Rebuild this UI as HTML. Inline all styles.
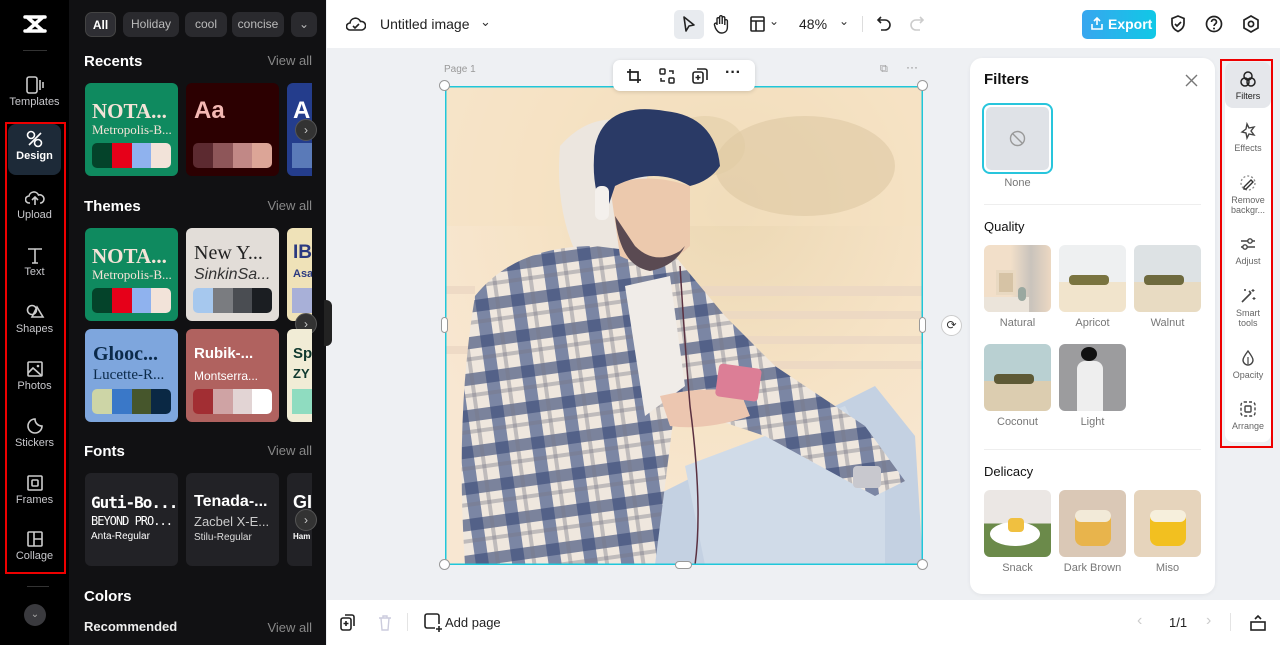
<!DOCTYPE html>
<html><head><meta charset="utf-8"><style>
*{box-sizing:border-box;margin:0;padding:0}
body{width:1280px;height:645px;overflow:hidden;font-family:"Liberation Sans",sans-serif;background:#eef0f3;position:relative}
.abs{position:absolute}
#rail{left:0;top:0;width:69px;height:645px;background:#000}
.ri{position:absolute;left:8px;width:53px;height:50px;color:#c8c8cc;font-size:11px;text-align:center}
.ri svg{display:block;margin:6px auto 2px}
#panel{left:69px;top:0;width:257px;height:645px;background:#111113;color:#fff}
.chip{position:absolute;top:12px;height:25px;border-radius:7px;background:#2a2a2e;color:#bbb;font-size:12px;line-height:25px;text-align:center}
.h{position:absolute;left:15px;font-size:15px;font-weight:bold;color:#fff}
.va{position:absolute;right:14px;font-size:13px;color:#888}
.card{position:absolute;width:93px;height:93px;border-radius:6px;overflow:hidden}
.sw{position:absolute;left:7px;bottom:8px;width:79px;height:25px;border-radius:5px;overflow:hidden;display:flex}
.sw i{flex:1}
.arr{position:absolute;width:22px;height:22px;border-radius:50%;background:#333;border:1px solid #555;color:#ccc;font-size:12px;line-height:20px;text-align:center}
#top{left:327px;top:0;width:953px;height:48px;background:#fff}
#bot{left:327px;top:600px;width:953px;height:45px;background:#fff}
#fp{left:970px;top:58px;width:245px;height:536px;background:#fff;border-radius:12px;box-shadow:0 1px 4px rgba(0,0,0,.06)}
.th{position:absolute;width:67px;height:67px;border-radius:6px;overflow:hidden}
.tl{position:absolute;width:67px;text-align:center;font-size:11px;color:#777}
#rr{left:1225px;top:62px;width:46px;height:380px;background:#fff;border-radius:8px}
.rt{position:absolute;left:0;width:46px;text-align:center;font-size:9px;color:#666;line-height:10px}
.rt svg{display:block;margin:0 auto 3px}
.hd{position:absolute;width:11px;height:11px;border-radius:50%;background:#fff;border:1px solid #999}
</style></head><body>

<div id="rail" class="abs">
  <svg class="abs" style="left:22px;top:14px" width="26" height="20" viewBox="0 0 26 20"><path d="M3 3h20M3 17h20M5 3l16 14M21 3L5 17" stroke="#fff" stroke-width="3.5" fill="none" stroke-linecap="round"/></svg>
  <div class="abs" style="left:23px;top:50px;width:24px;height:1px;background:#333"></div>
  <div class="ri" style="top:70px"><svg width="20" height="18" viewBox="0 0 20 18"><rect x="2" y="1" width="10" height="16" rx="2" stroke="#ccc" stroke-width="1.6" fill="none"/><path d="M15 4v10M18 6v6" stroke="#ccc" stroke-width="1.6"/></svg>Templates</div>
  <div class="ri" style="top:124px;background:#1d2a38;border-radius:8px;height:51px;color:#fff;font-weight:bold"><svg width="20" height="18" viewBox="0 0 20 18"><circle cx="6" cy="5" r="3.5" stroke="#fff" stroke-width="1.6" fill="none"/><circle cx="13" cy="13" r="3.5" stroke="#fff" stroke-width="1.6" fill="none"/><path d="M4 15L16 3" stroke="#fff" stroke-width="1.6"/></svg>Design</div>
  <div class="ri" style="top:183px"><svg width="20" height="18" viewBox="0 0 20 18"><path d="M5 14H4a3.5 3.5 0 010-7 5 5 0 019.5-1A4 4 0 0116 14h-1M10 8v8M7 11l3-3 3 3" stroke="#ccc" stroke-width="1.6" fill="none"/></svg>Upload</div>
  <div class="ri" style="top:240px"><svg width="20" height="18" viewBox="0 0 20 18"><path d="M3 3h14M10 3v14M7 17h6" stroke="#ccc" stroke-width="1.6" fill="none"/></svg>Text</div>
  <div class="ri" style="top:297px"><svg width="20" height="18" viewBox="0 0 20 18"><circle cx="7" cy="7" r="4.5" stroke="#ccc" stroke-width="1.6" fill="none"/><path d="M12 4l6 10H7z" stroke="#ccc" stroke-width="1.6" fill="none"/></svg>Shapes</div>
  <div class="ri" style="top:354px"><svg width="20" height="18" viewBox="0 0 20 18"><rect x="3" y="2" width="14" height="14" rx="1" stroke="#ccc" stroke-width="1.6" fill="none"/><path d="M3 13l5-5 9 8" stroke="#ccc" stroke-width="1.6" fill="none"/><circle cx="13" cy="6" r="1.3" fill="#ccc"/></svg>Photos</div>
  <div class="ri" style="top:411px"><svg width="20" height="18" viewBox="0 0 20 18"><path d="M17 9a7 7 0 11-7-7c0 4 3 7 7 7z" stroke="#ccc" stroke-width="1.6" fill="none"/></svg>Stickers</div>
  <div class="ri" style="top:468px"><svg width="20" height="18" viewBox="0 0 20 18"><rect x="3" y="2" width="14" height="14" rx="1" stroke="#ccc" stroke-width="1.6" fill="none"/><rect x="7" y="6" width="6" height="6" rx="1" stroke="#ccc" stroke-width="1.6" fill="none"/></svg>Frames</div>
  <div class="ri" style="top:524px"><svg width="20" height="18" viewBox="0 0 20 18"><rect x="3" y="2" width="14" height="14" rx="1" stroke="#ccc" stroke-width="1.6" fill="none"/><path d="M9 2v14M9 9h8" stroke="#ccc" stroke-width="1.6"/></svg>Collage</div>
  <div class="abs" style="left:5px;top:122px;width:61px;height:452px;border:2px solid #e00"></div>
  <div class="abs" style="left:27px;top:586px;width:22px;height:1px;background:#333"></div>
  <div class="abs" style="left:24px;top:604px;width:22px;height:22px;border-radius:50%;background:#3a3a3e;color:#aaa;font-size:10px;text-align:center;line-height:22px">⌄</div>
</div>

<div id="panel" class="abs">
  <div class="chip" style="left:16px;width:31px;background:#2e2e33;border:1px solid #444;color:#fff;font-weight:bold">All</div>
  <div class="chip" style="left:54px;width:56px">Holiday</div>
  <div class="chip" style="left:116px;width:42px">cool</div>
  <div class="chip" style="left:163px;width:52px;overflow:hidden">concise</div>
  <div class="chip" style="left:222px;width:26px">⌄</div>

  <div class="h" style="top:53px">Recents</div><div class="va" style="top:53px">View all</div>
  <div class="card" style="left:16px;top:83px;background:#0f8a5f"><div class="abs" style="left:7px;top:16px;font:bold 21px 'Liberation Serif',serif;color:#f4e3d7">NOTA...</div><div class="abs" style="left:7px;top:39px;font:13px 'Liberation Serif',serif;color:#f4e3d7">Metropolis-B...</div><div class="sw"><i style="background:#04432a"></i><i style="background:#e60019"></i><i style="background:#8fb2ee"></i><i style="background:#f2e3d9"></i></div></div>
  <div class="card" style="left:117px;top:83px;background:#2c0001"><div class="abs" style="left:8px;top:14px;font:bold 24px 'Liberation Sans',sans-serif;color:#f4b8b3">Aa</div><div class="sw"><i style="background:#5c2a30"></i><i style="background:#8e5659"></i><i style="background:#c18886"></i><i style="background:#dca597"></i></div></div>
  <div class="card" style="left:218px;top:83px;width:25px;background:#243d8c;border-radius:6px 0 0 6px"><div class="abs" style="left:6px;top:14px;font:bold 24px sans-serif;color:#fff">A</div><div class="abs" style="left:5px;bottom:8px;width:20px;height:25px;background:#5a7ab8"></div></div>
  <div class="arr" style="left:226px;top:119px">›</div>

  <div class="h" style="top:198px">Themes</div><div class="va" style="top:198px">View all</div>
  <div class="card" style="left:16px;top:228px;background:#0f8a5f"><div class="abs" style="left:7px;top:16px;font:bold 21px 'Liberation Serif',serif;color:#f4e3d7">NOTA...</div><div class="abs" style="left:7px;top:39px;font:13px 'Liberation Serif',serif;color:#f4e3d7">Metropolis-B...</div><div class="sw"><i style="background:#04432a"></i><i style="background:#e60019"></i><i style="background:#8fb2ee"></i><i style="background:#f2e3d9"></i></div></div>
  <div class="card" style="left:117px;top:228px;background:#e2ddd8"><div class="abs" style="left:8px;top:14px;font:20px 'Liberation Serif',serif;color:#222">New Y...</div><div class="abs" style="left:8px;top:38px;font:italic 16px 'Liberation Sans',sans-serif;color:#333">SinkinSa...</div><div class="sw"><i style="background:#a6c8ee"></i><i style="background:#7a7c80"></i><i style="background:#4a4d52"></i><i style="background:#1b1e22"></i></div></div>
  <div class="card" style="left:218px;top:228px;width:25px;background:#efe2b8;border-radius:6px 0 0 6px"><div class="abs" style="left:6px;top:14px;font:bold 19px sans-serif;color:#2b3a80">IB</div><div class="abs" style="left:6px;top:40px;font:bold 11px sans-serif;color:#2b3a80">Asa</div><div class="abs" style="left:5px;bottom:8px;width:20px;height:25px;background:#a8b0d8"></div></div>
  <div class="arr" style="left:226px;top:313px">›</div>

  <div class="card" style="left:16px;top:329px;background:#7ea6dd"><div class="abs" style="left:8px;top:14px;font:bold 20px 'Liberation Serif',serif;color:#0b2a4a">Glooc...</div><div class="abs" style="left:8px;top:38px;font:15px 'Liberation Serif',serif;color:#0b2a4a">Lucette-R...</div><div class="sw"><i style="background:#cdd5a6"></i><i style="background:#3a78c8"></i><i style="background:#46562c"></i><i style="background:#0a2844"></i></div></div>
  <div class="card" style="left:117px;top:329px;background:#b0625f"><div class="abs" style="left:8px;top:16px;font:bold 15px sans-serif;color:#fff">Rubik-...</div><div class="abs" style="left:8px;top:40px;font:12px sans-serif;color:#fff">Montserra...</div><div class="sw"><i style="background:#a22e33"></i><i style="background:#cfa3a4"></i><i style="background:#e2d4d4"></i><i style="background:#fff"></i></div></div>
  <div class="card" style="left:218px;top:329px;width:25px;background:#f1ecd6;border-radius:6px 0 0 6px"><div class="abs" style="left:6px;top:16px;font:bold 15px sans-serif;color:#10382e">Sp</div><div class="abs" style="left:6px;top:37px;font:bold 13px sans-serif;color:#10382e">ZY</div><div class="abs" style="left:5px;bottom:8px;width:20px;height:25px;background:#8fdcc0"></div></div>

  <div class="h" style="top:443px">Fonts</div><div class="va" style="top:443px">View all</div>
  <div class="card" style="left:16px;top:473px;background:#222226"><div class="abs" style="left:6px;top:20px;font:bold 16px 'DejaVu Sans Mono',monospace;color:#fff;letter-spacing:-1px">Guti-Bo...</div><div class="abs" style="left:6px;top:41px;font:12px 'DejaVu Sans Mono',monospace;color:#fff;letter-spacing:-1px">BEYOND PRO...</div><div class="abs" style="left:6px;top:58px;font:10px sans-serif;color:#fff">Anta-Regular</div></div>
  <div class="card" style="left:117px;top:473px;background:#222226"><div class="abs" style="left:8px;top:20px;font:bold 16px sans-serif;color:#fff">Tenada-...</div><div class="abs" style="left:8px;top:41px;font:13px sans-serif;color:#ccc">Zacbel X-E...</div><div class="abs" style="left:8px;top:59px;font:10px sans-serif;color:#ddd">Stilu-Regular</div></div>
  <div class="card" style="left:218px;top:473px;width:25px;background:#222226;border-radius:6px 0 0 6px"><div class="abs" style="left:6px;top:19px;font:bold 18px sans-serif;color:#fff">GI</div><div class="abs" style="left:6px;top:59px;font:bold 8px sans-serif;color:#fff">Ham</div></div>
  <div class="arr" style="left:226px;top:509px">›</div>

  <div class="h" style="top:588px">Colors</div>
  <div class="abs" style="left:15px;top:619px;font-size:13px;font-weight:bold;color:#eee">Recommended</div><div class="va" style="top:620px">View all</div>
</div>
<div class="abs" style="left:324px;top:300px;width:8px;height:46px;background:#222;border-radius:0 6px 6px 0"></div>

<div id="top" class="abs">
  <svg class="abs" style="left:19px;top:15px" width="20" height="18" viewBox="0 0 20 18"><path d="M5 15H4a3.5 3.5 0 010-7 5.5 5.5 0 0110.5-1.5A4.3 4.3 0 0116 15z" stroke="#222" stroke-width="1.6" fill="none"/><path d="M7 11l2 2 4-4" stroke="#222" stroke-width="1.6" fill="none"/></svg>
  <div class="abs" style="left:53px;top:16px;font-size:14px;color:#222">Untitled image</div>
  <div class="abs" style="left:153px;top:14px;font-size:13px;color:#333">⌄</div>
  <div class="abs" style="left:347px;top:10px;width:30px;height:29px;background:#e8ebef;border-radius:5px"></div>
  <svg class="abs" style="left:354px;top:15px" width="16" height="19" viewBox="0 0 16 19"><path d="M3 2l10 8-5 1-3 5z" stroke="#222" stroke-width="1.6" fill="none" stroke-linejoin="round"/></svg>
  <svg class="abs" style="left:385px;top:14px" width="18" height="20" viewBox="0 0 18 20"><path d="M5 11V5a1.3 1.3 0 012.6 0v5V3a1.3 1.3 0 012.6 0v7V4a1.3 1.3 0 012.6 0v7V7a1.3 1.3 0 012.6 0v6c0 4-2.5 6-6 6-3 0-4.5-2-6-5L2.5 11a1.3 1.3 0 012.5-1z" stroke="#222" stroke-width="1.4" fill="none"/></svg>
  <svg class="abs" style="left:422px;top:15px" width="17" height="18" viewBox="0 0 17 18"><rect x="2" y="2" width="13" height="14" rx="1" stroke="#222" stroke-width="1.6" fill="none"/><path d="M2 6h13M7 6v10" stroke="#222" stroke-width="1.6"/></svg>
  <div class="abs" style="left:442px;top:14px;font-size:12px;color:#333">⌄</div>
  <div class="abs" style="left:472px;top:16px;font-size:14px;color:#222">48%</div>
  <div class="abs" style="left:512px;top:14px;font-size:12px;color:#333">⌄</div>
  <div class="abs" style="left:535px;top:16px;width:1px;height:16px;background:#ddd"></div>
  <svg class="abs" style="left:549px;top:15px" width="16" height="18" viewBox="0 0 16 18"><path d="M5 2L2 5l3 3M2 5h7a5 5 0 010 10H5" stroke="#222" stroke-width="1.6" fill="none"/></svg>
  <svg class="abs" style="left:582px;top:15px" width="16" height="18" viewBox="0 0 16 18"><path d="M11 2l3 3-3 3M14 5H7a5 5 0 000 10h4" stroke="#ccc" stroke-width="1.6" fill="none"/></svg>
  <div class="abs" style="left:755px;top:10px;width:74px;height:29px;border-radius:5px;background:linear-gradient(90deg,#38a6ef,#10c8e6);color:#fff;font-size:14px;font-weight:bold;line-height:29px;padding-left:26px">Export</div>
  <svg class="abs" style="left:763px;top:16px" width="14" height="15" viewBox="0 0 14 15"><path d="M7 9V2M4 5l3-3 3 3M2 8v5h10V8" stroke="#fff" stroke-width="1.6" fill="none"/></svg>
  <svg class="abs" style="left:842px;top:14px" width="18" height="20" viewBox="0 0 18 20"><path d="M9 2l6 2.5v5c0 4-3 6.5-6 8-3-1.5-6-4-6-8v-5z" stroke="#222" stroke-width="1.7" fill="none"/><path d="M6 10l2 2 4-4" stroke="#222" stroke-width="1.7" fill="none"/></svg>
  <svg class="abs" style="left:877px;top:14px" width="20" height="20" viewBox="0 0 20 20"><circle cx="10" cy="10" r="7.5" stroke="#222" stroke-width="1.7" fill="none"/><path d="M7.5 8a2.5 2.5 0 015 0c0 2-2.5 2-2.5 4" stroke="#222" stroke-width="1.7" fill="none"/><circle cx="10" cy="14.5" r="1" fill="#222"/></svg>
  <svg class="abs" style="left:914px;top:14px" width="20" height="20" viewBox="0 0 20 20"><path d="M10 2l7 4v8l-7 4-7-4V6z" stroke="#222" stroke-width="1.7" fill="none"/><circle cx="10" cy="10" r="2.6" stroke="#222" stroke-width="1.7" fill="none"/></svg>
</div>

<!-- canvas -->
<div class="abs" style="left:444px;top:64px;font-size:10px;color:#999">Page 1</div>
<div class="abs" style="left:880px;top:63px;font-size:11px;color:#999">⧉</div>
<div class="abs" style="left:906px;top:60px;font-size:12px;color:#888">···</div>

<svg class="abs" style="left:445px;top:86px" width="478" height="479" viewBox="0 0 478 479">
  <defs>
    <pattern id="pl" width="36" height="36" patternUnits="userSpaceOnUse" patternTransform="rotate(-8)">
      <rect width="36" height="36" fill="#efe7de"/>
      <rect x="0" y="0" width="13" height="36" fill="#4a5d8c" opacity=".7"/>
      <rect x="0" y="0" width="36" height="12" fill="#3e4d7a" opacity=".65"/>
      <rect x="20" y="0" width="4" height="36" fill="#778" opacity=".4"/>
      <rect x="0" y="20" width="36" height="4" fill="#778" opacity=".4"/>
    </pattern>
    <radialGradient id="bg" cx=".6" cy=".25" r=".7"><stop offset="0" stop-color="#ecd8b4"/><stop offset=".6" stop-color="#f6e3c6"/><stop offset="1" stop-color="#f8e7d2"/></radialGradient>
  </defs>
  <rect width="478" height="479" fill="url(#bg)"/>
  <rect x="0" y="0" width="478" height="140" fill="#f6e2c1" opacity=".5"/>
  <ellipse cx="360" cy="80" rx="90" ry="50" fill="#d9c49e" opacity=".5"/>
  <ellipse cx="260" cy="60" rx="40" ry="30" fill="#e0cba4" opacity=".5"/>
  <g fill="#ecd8c4" opacity=".8"><rect x="230" y="200" width="248" height="10"/><rect x="230" y="225" width="248" height="8"/><rect x="230" y="250" width="248" height="8"/><rect x="230" y="275" width="248" height="8"/><rect x="0" y="200" width="30" height="8"/><rect x="0" y="260" width="30" height="8"/></g>
  <path d="M190 420 L430 300 L470 350 L478 479 L200 479 Z" fill="#c4d1e2"/>
  <path d="M240 380 L400 320 L440 400 L440 479 L260 479Z" fill="#d0dbe8"/>
  <path d="M115 60 Q150 20 200 40 L205 170 L130 165 Q110 120 115 60Z" fill="#ece6df"/>
  <path d="M30 210 Q70 160 150 160 L230 170 L280 230 L330 280 L420 340 L460 395 L430 410 L320 350 L230 320 L210 479 L20 479 Q10 330 30 210Z" fill="url(#pl)"/>
  <path d="M180 200 L225 190 L240 300 L200 330Z" fill="#f0ece8"/>
  <path d="M165 100 Q200 85 245 100 L245 160 Q215 190 175 170 Z" fill="#ecc9ad"/>
  <path d="M170 130 Q175 180 205 185 Q230 180 240 160 L235 165 Q210 180 190 160Z" fill="#5a4a52"/>
  <path d="M150 60 Q160 15 220 25 Q270 30 275 80 Q265 95 245 100 Q210 80 170 100 L160 130 Q145 100 150 60Z" fill="#2a3a66"/>
  <rect x="150" y="100" width="14" height="34" rx="6" fill="#f4f0ec"/>
  <path d="M215 310 Q255 300 295 305 L305 330 Q260 345 225 340Z" fill="#ecc6b0"/>
  <rect x="272" y="280" width="43" height="33" rx="4" fill="#dc7e96" transform="rotate(8 293 296)"/>
  <rect x="408" y="380" width="28" height="22" rx="4" fill="#c8c8ce"/>
  <path d="M235 180 Q240 260 245 320 Q258 420 250 479" stroke="#5a3040" stroke-width="1.5" fill="none"/>
  <rect x="0.75" y="0.75" width="476.5" height="477.5" fill="none" stroke="#1fc7da" stroke-width="1.5"/>
</svg>
<div class="hd" style="left:439px;top:80px"></div><div class="hd" style="left:917px;top:80px"></div>
<div class="hd" style="left:439px;top:559px"></div><div class="hd" style="left:917px;top:559px"></div>
<div class="abs" style="left:441px;top:317px;width:7px;height:16px;border-radius:4px;background:#fff;border:1px solid #999"></div>
<div class="abs" style="left:919px;top:317px;width:7px;height:16px;border-radius:4px;background:#fff;border:1px solid #999"></div>
<div class="abs" style="left:675px;top:561px;width:17px;height:8px;border-radius:4px;background:#fff;border:1px solid #999"></div>
<div class="abs" style="left:941px;top:315px;width:21px;height:21px;border-radius:50%;background:#fff;border:1px solid #ccc;font-size:12px;line-height:19px;text-align:center;color:#333">⟳</div>

<div class="abs" style="left:613px;top:60px;width:142px;height:31px;background:#fff;border-radius:7px;box-shadow:0 1px 4px rgba(0,0,0,.15)"></div>
<svg class="abs" style="left:626px;top:68px" width="16" height="16" viewBox="0 0 16 16"><path d="M4 1v11h11M1 4h11v11" stroke="#222" stroke-width="1.7" fill="none"/></svg>
<svg class="abs" style="left:659px;top:68px" width="16" height="16" viewBox="0 0 16 16"><rect x="1" y="1" width="5" height="5" rx="1" stroke="#222" stroke-width="1.5" fill="none"/><rect x="10" y="10" width="5" height="5" rx="1" stroke="#222" stroke-width="1.5" fill="none"/><path d="M10 3h4v3M6 13H2v-3" stroke="#222" stroke-width="1.5" fill="none"/></svg>
<svg class="abs" style="left:692px;top:68px" width="16" height="16" viewBox="0 0 16 16"><rect x="1" y="4" width="10" height="11" rx="2" stroke="#222" stroke-width="1.6" fill="none"/><path d="M5 1h8a2 2 0 012 2v9M6 7v5M3.5 9.5h5" stroke="#222" stroke-width="1.6" fill="none"/></svg>
<div class="abs" style="left:725px;top:64px;font-size:16px;font-weight:bold;color:#222">···</div>

<!-- filters panel -->
<div id="fp" class="abs">
  <div class="abs" style="left:14px;top:13px;font-size:15px;font-weight:bold;color:#111">Filters</div>
  <svg class="abs" style="left:215px;top:16px" width="13" height="13" viewBox="0 0 13 13"><path d="M1 1l11 11M12 1L1 12" stroke="#777" stroke-width="1.4"/></svg>
  <div class="abs" style="left:12px;top:45px;width:71px;height:71px;border:2px solid #28c5dc;border-radius:8px;padding:2px"><div style="width:100%;height:100%;background:#dfe2e7;border-radius:5px"></div></div>
  <svg class="abs" style="left:39px;top:72px" width="17" height="17" viewBox="0 0 17 17"><circle cx="8.5" cy="8.5" r="7" stroke="#999" stroke-width="1.4" fill="none"/><path d="M3.5 3.5l10 10" stroke="#999" stroke-width="1.4"/></svg>
  <div class="tl" style="left:14px;top:119px">None</div>
  <div class="abs" style="left:14px;top:146px;width:217px;height:1px;background:#eee"></div>
  <div class="abs" style="left:14px;top:161px;font-size:13px;color:#111">Quality</div>
  <div class="th" style="left:14px;top:187px;background:linear-gradient(90deg,#f2dfc9 40%,#c9c3bc 70%,#ecd8c2)"><div class="abs" style="left:12px;top:25px;width:20px;height:25px;background:#d6c3a5;border:3px solid #e9d9c2"></div><div class="abs" style="left:0;top:52px;width:45px;height:15px;background:#ebe4da"></div><div class="abs" style="left:34px;top:42px;width:8px;height:14px;border-radius:4px;background:#9aa8a0"></div></div>
  <div class="th" style="left:89px;top:187px;background:linear-gradient(#eef0f1 55%,#f1e4cc 55%)"><div class="abs" style="left:10px;top:30px;width:40px;height:10px;background:#7a7440;border-radius:4px"></div></div>
  <div class="th" style="left:164px;top:187px;background:linear-gradient(#dde2e4 55%,#e8dbc2 55%)"><div class="abs" style="left:10px;top:30px;width:40px;height:10px;background:#6e6a3e;border-radius:4px"></div></div>
  <div class="tl" style="left:14px;top:259px">Natural</div><div class="tl" style="left:89px;top:259px">Apricot</div><div class="tl" style="left:164px;top:259px">Walnut</div>
  <div class="th" style="left:14px;top:286px;background:linear-gradient(#b9d0d2 55%,#dccdb0 55%)"><div class="abs" style="left:10px;top:30px;width:40px;height:10px;background:#5e5a36;border-radius:4px"></div></div>
  <div class="th" style="left:89px;top:286px;background:#9c9c9e"><div class="abs" style="left:22px;top:3px;width:16px;height:14px;border-radius:50%;background:#111"></div><div class="abs" style="left:18px;top:17px;width:26px;height:50px;background:#eeeeee;border-radius:8px 8px 0 0"></div></div>
  <div class="tl" style="left:14px;top:358px">Coconut</div><div class="tl" style="left:89px;top:358px">Light</div>
  <div class="abs" style="left:14px;top:391px;width:217px;height:1px;background:#eee"></div>
  <div class="abs" style="left:14px;top:406px;font-size:13px;color:#111">Delicacy</div>
  <div class="th" style="left:14px;top:432px;background:linear-gradient(#ebe7e4 50%,#6b8a4a 50%)"><div class="abs" style="left:6px;top:32px;width:50px;height:24px;border-radius:50%;background:#fff"></div><div class="abs" style="left:24px;top:28px;width:16px;height:14px;border-radius:4px;background:#f0c040"></div></div>
  <div class="th" style="left:89px;top:432px;background:#dac8b6"><div class="abs" style="left:16px;top:20px;width:36px;height:36px;border-radius:8px;background:#e8b44c"></div><div class="abs" style="left:16px;top:20px;width:36px;height:12px;border-radius:8px;background:#f2ead8"></div></div>
  <div class="th" style="left:164px;top:432px;background:#e6d4bc"><div class="abs" style="left:16px;top:20px;width:36px;height:36px;border-radius:8px;background:#f2c020"></div><div class="abs" style="left:16px;top:20px;width:36px;height:12px;border-radius:8px;background:#f6efdc"></div></div>
  <div class="tl" style="left:14px;top:504px">Snack</div><div class="tl" style="left:84px;top:504px;width:77px">Dark Brown</div><div class="tl" style="left:164px;top:504px">Miso</div>
</div>

<!-- right rail -->
<div id="rr" class="abs">
  <div class="abs" style="left:0;top:0;width:46px;height:46px;background:#e5e7eb;border-radius:8px"></div>
  <div class="rt" style="top:8px;color:#222"><svg width="18" height="18" viewBox="0 0 18 18"><circle cx="9" cy="6" r="4" stroke="#222" stroke-width="1.5" fill="none"/><circle cx="6" cy="12" r="4" stroke="#222" stroke-width="1.5" fill="none"/><circle cx="12" cy="12" r="4" stroke="#222" stroke-width="1.5" fill="none"/></svg>Filters</div>
  <div class="rt" style="top:60px"><svg width="18" height="18" viewBox="0 0 18 18"><path d="M8 2l2 4 5-1-3 4 3 4-5-1-2 4-1-5-4-1 4-3z" stroke="#444" stroke-width="1.4" fill="none"/></svg>Effects</div>
  <div class="rt" style="top:112px"><svg width="18" height="18" viewBox="0 0 18 18"><circle cx="9" cy="9" r="7" stroke="#888" stroke-width="1.3" stroke-dasharray="2 2" fill="none"/><path d="M5 13l7-7 2 2-7 7H5z" stroke="#333" stroke-width="1.4" fill="none"/></svg>Remove<br>backgr...</div>
  <div class="rt" style="top:173px"><svg width="18" height="18" viewBox="0 0 18 18"><path d="M2 6h14M2 12h14" stroke="#444" stroke-width="1.4"/><circle cx="11" cy="6" r="2.2" fill="#fff" stroke="#444" stroke-width="1.4"/><circle cx="6" cy="12" r="2.2" fill="#fff" stroke="#444" stroke-width="1.4"/></svg>Adjust</div>
  <div class="rt" style="top:225px"><svg width="18" height="18" viewBox="0 0 18 18"><path d="M3 15l9-9M10 4l2 2" stroke="#444" stroke-width="1.6"/><path d="M14 2v3M12.5 3.5h3M15 10v3M13.5 11.5h3M6 2v2M5 3h2" stroke="#444" stroke-width="1.1"/></svg>Smart<br>tools</div>
  <div class="rt" style="top:287px"><svg width="18" height="18" viewBox="0 0 18 18"><path d="M9 2C6 6 4 9 4 11a5 5 0 0010 0c0-2-2-5-5-9z" stroke="#444" stroke-width="1.4" fill="none"/><path d="M9 8v7" stroke="#444" stroke-width="1.2"/></svg>Opacity</div>
  <div class="rt" style="top:338px"><svg width="18" height="18" viewBox="0 0 18 18"><rect x="2" y="2" width="14" height="14" rx="3" stroke="#444" stroke-width="1.4" stroke-dasharray="3 2" fill="none"/><rect x="6" y="6" width="6" height="6" rx="1" stroke="#444" stroke-width="1.4" fill="none"/></svg>Arrange</div>
</div>
<div class="abs" style="left:1220px;top:59px;width:53px;height:389px;border:2px solid #e00"></div>

<!-- bottom -->
<div id="bot" class="abs">
  <svg class="abs" style="left:13px;top:14px" width="16" height="17" viewBox="0 0 16 17"><rect x="1" y="4" width="10" height="12" rx="2" stroke="#222" stroke-width="1.6" fill="none"/><path d="M5 1h7a2 2 0 012 2v9M6 7v5M3.5 9.5h5" stroke="#222" stroke-width="1.6" fill="none"/></svg>
  <svg class="abs" style="left:51px;top:14px" width="14" height="17" viewBox="0 0 14 17"><path d="M1 4h12M5 4V2h4v2M3 4l1 12h6l1-12" stroke="#ccd" stroke-width="1.4" fill="none"/></svg>
  <div class="abs" style="left:80px;top:13px;width:1px;height:18px;background:#e4e4e4"></div>
  <svg class="abs" style="left:97px;top:13px" width="18" height="19" viewBox="0 0 18 19"><path d="M11 15H3a2 2 0 01-2-2V3a2 2 0 012-2h10a2 2 0 012 2v8M15 13v6M12 16h6" stroke="#222" stroke-width="1.6" fill="none"/></svg>
  <div class="abs" style="left:118px;top:15px;font-size:13px;color:#222">Add page</div>
  <div class="abs" style="left:810px;top:12px;font-size:16px;color:#ccc">‹</div>
  <div class="abs" style="left:842px;top:15px;font-size:13px;color:#222">1/1</div>
  <div class="abs" style="left:879px;top:12px;font-size:16px;color:#ccc">›</div>
  <div class="abs" style="left:903px;top:13px;width:1px;height:18px;background:#e4e4e4"></div>
  <svg class="abs" style="left:922px;top:13px" width="18" height="19" viewBox="0 0 18 19"><rect x="2" y="9" width="14" height="8" stroke="#222" stroke-width="1.6" fill="none"/><path d="M6 6l3-3 3 3" stroke="#222" stroke-width="1.6" fill="none"/></svg>
</div>
</body></html>
